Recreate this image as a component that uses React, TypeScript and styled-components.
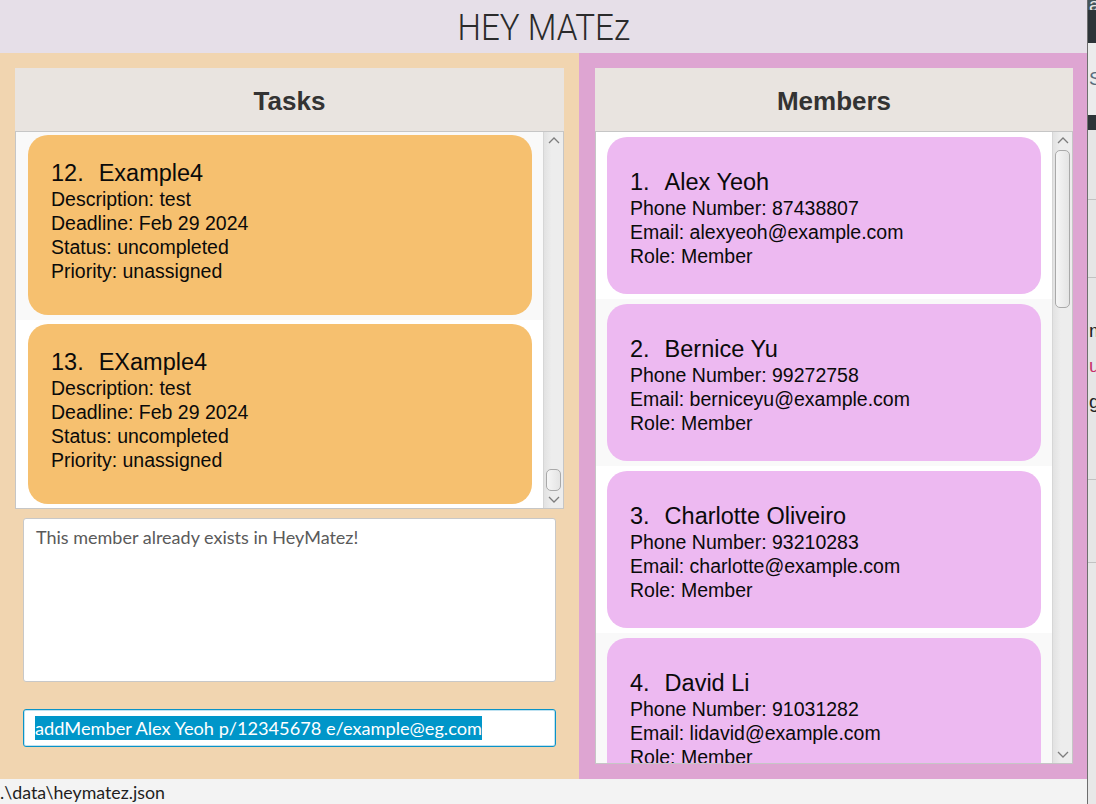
import React from 'react';
import styled, { createGlobalStyle } from 'styled-components';

const GlobalStyle = createGlobalStyle`
  html, body { margin: 0; padding: 0; width: 1096px; height: 804px; overflow: hidden; background: #f3f3f3; }
  #root { width: 1096px; height: 804px; }
  * { box-sizing: border-box; }
`;

const Screen = styled.div`
  display: flex;
  width: 1096px;
  height: 804px;
`;

const AppWindow = styled.div`
  width: 1087px;
  display: flex;
  flex-direction: column;
`;

const TitleBar = styled.header`
  height: 53px;
  background: #e6dfe8;
  display: flex;
  align-items: center;
  justify-content: center;
`;

const TitleText = styled.h1`
  margin: 0;
  padding-top: 2px;
  font-family: Roboto, "Liberation Sans", sans-serif;
  font-weight: 300;
  font-size: 36px;
  line-height: 1;
  color: #2b2b2b;
  transform: scaleX(0.92);
`;

const Main = styled.main`
  flex: 1;
  min-height: 0;
  display: grid;
  grid-template-columns: 579px 1fr;
`;

const LeftPane = styled.section`
  background: #f1d5b0;
  padding: 15px 15px 0 15px;
  display: flex;
  flex-direction: column;
  min-height: 0;
`;

const RightPane = styled.section`
  background: #dea5d2;
  padding: 15px 14px 15px 16px;
  display: flex;
  flex-direction: column;
  min-height: 0;
`;

const Panel = styled.div<{ $grow?: boolean }>`
  display: flex;
  flex-direction: column;
  flex: ${(p) => (p.$grow ? '1' : 'none')};
  min-height: 0;
`;

const PanelHeader = styled.div`
  height: 63px;
  flex: none;
  padding-top: 3px;
  background: #e9e4e0;
  display: flex;
  align-items: center;
  justify-content: center;
  font-family: "Liberation Sans", Arial, sans-serif;
  font-weight: 700;
  font-size: 26px;
  color: #333333;
`;

const ListBox = styled.div<{ $height?: number }>`
  ${(p) => (p.$height ? `height: ${p.$height}px; flex: none;` : 'flex: 1;')}
  min-height: 0;
  border: 1px solid #c6c6c6;
  background: #ffffff;
  display: flex;
`;

const Viewport = styled.div`
  flex: 1;
  min-width: 0;
  overflow: hidden;
`;

const ViewportInner = styled.div<{ $shift: number }>`
  margin-top: ${(p) => p.$shift}px;
`;

const Cell = styled.div<{ $odd: boolean; $kind: 'task' | 'member' }>`
  background: ${(p) => (p.$odd ? '#f9f9f9' : '#ffffff')};
  padding: ${(p) => (p.$kind === 'task' ? '4px 11px 5px 12px' : '5px 11px 5px 11px')};
`;

const Card = styled.div<{ $kind: 'task' | 'member' }>`
  border-radius: 20px;
  background: ${(p) => (p.$kind === 'task' ? '#f6c06f' : '#edb9f1')};
  padding: ${(p) => (p.$kind === 'task' ? '24px 20px 32px 23px' : '31px 20px 26px 23px')};
  font-family: "Liberation Sans", Arial, sans-serif;
  color: #0a0a0a;
`;

const CardTitle = styled.div`
  display: flex;
  align-items: baseline;
  font-size: 23.5px;
  line-height: 28px;
  white-space: nowrap;
`;

const CardIndex = styled.span`
  margin-right: 15px;
`;

const CardLine = styled.div`
  font-size: 19.5px;
  line-height: 24px;
  white-space: nowrap;
`;

const ScrollBar = styled.div`
  width: 20px;
  flex: none;
  display: flex;
  flex-direction: column;
  background: linear-gradient(to right, #e2e2e2, #ededed 40%, #ededed);
  border-left: 1px solid #d6d6d6;
`;

const ScrollButton = styled.div`
  height: 17px;
  flex: none;
  display: flex;
  align-items: center;
  justify-content: center;
`;

const Track = styled.div<{ $offset: number }>`
  flex: 1;
  padding-top: ${(p) => p.$offset}px;
`;

const Thumb = styled.div<{ $height: number }>`
  height: ${(p) => p.$height}px;
  margin: 0 2px 0 2px;
  border: 1px solid #a9a9a9;
  border-radius: 5px;
  background: linear-gradient(to right, #f6f6f6, #e4e4e4);
`;

const ResultBox = styled.div`
  margin: 9px 8px 0 8px;
  height: 164px;
  flex: none;
  background: #ffffff;
  border: 1px solid #c8c8c8;
  border-radius: 3px;
  padding: 7px 12px;
  font-family: Lato, "Open Sans", sans-serif;
  font-size: 18px;
  line-height: 22px;
  color: #5a5a5a;
`;

const CommandBox = styled.div`
  margin: 27px 8px 0 8px;
  height: 38px;
  flex: none;
  background: #ffffff;
  border: 1px solid #0a93c7;
  box-shadow: inset 0 0 0 1px #bfe2f1;
  border-radius: 3px;
  padding-left: 11px;
  display: flex;
  align-items: center;
`;

const Selection = styled.span`
  background: #0096c9;
  color: #ffffff;
  height: 24px;
  line-height: 24px;
  font-family: Lato, "Open Sans", sans-serif;
  font-size: 18.2px;
  white-space: nowrap;
`;

const StatusBar = styled.footer`
  height: 25px;
  flex: none;
  background: #f3f3f3;
  font-family: Lato, "Open Sans", sans-serif;
  font-size: 17.8px;
  line-height: 27px;
  color: #1e1e1e;
  white-space: nowrap;
`;

const Divider = styled.div`
  width: 1px;
  background: #6e6e6e;
`;

const Strip = styled.div`
  flex: 1;
  display: flex;
  flex-direction: column;
  overflow: hidden;
  background: #e6e6e6;
  font-family: "Liberation Sans", Arial, sans-serif;
  font-size: 19px;
`;

const StripBand = styled.div<{ $h: number; $bg: string; $color?: string; $line?: boolean }>`
  height: ${(p) => p.$h}px;
  flex: none;
  background: ${(p) => p.$bg};
  color: ${(p) => p.$color || '#222'};
  border-bottom: ${(p) => (p.$line ? '1px solid #c2c2c2' : 'none')};
  line-height: ${(p) => p.$h}px;
  padding-left: 1px;
  overflow: hidden;
  white-space: nowrap;
`;

const Chevron = ({ down }: { down?: boolean }) => (
  <svg width="12" height="7" viewBox="0 0 12 7">
    <polyline
      points={down ? '1,1 6,6 11,1' : '1,6 6,1 11,6'}
      fill="none"
      stroke="#7d7d7d"
      strokeWidth="1.3"
    />
  </svg>
);

type Task = { id: number; name: string; description: string; deadline: string; status: string; priority: string };
type Member = { id: number; name: string; phone: string; email: string; role: string };

const tasks: Task[] = [
  { id: 12, name: 'Example4', description: 'test', deadline: 'Feb 29 2024', status: 'uncompleted', priority: 'unassigned' },
  { id: 13, name: 'EXample4', description: 'test', deadline: 'Feb 29 2024', status: 'uncompleted', priority: 'unassigned' },
];

const members: Member[] = [
  { id: 1, name: 'Alex Yeoh', phone: '87438807', email: 'alexyeoh@example.com', role: 'Member' },
  { id: 2, name: 'Bernice Yu', phone: '99272758', email: 'berniceyu@example.com', role: 'Member' },
  { id: 3, name: 'Charlotte Oliveiro', phone: '93210283', email: 'charlotte@example.com', role: 'Member' },
  { id: 4, name: 'David Li', phone: '91031282', email: 'lidavid@example.com', role: 'Member' },
];

const Scroller = ({ offset, height }: { offset: number; height: number }) => (
  <ScrollBar>
    <ScrollButton>
      <Chevron />
    </ScrollButton>
    <Track $offset={offset}>
      <Thumb $height={height} />
    </Track>
    <ScrollButton>
      <Chevron down />
    </ScrollButton>
  </ScrollBar>
);

export default function App() {
  return (
    <>
      <GlobalStyle />
      <Screen>
        <AppWindow>
          <TitleBar>
            <TitleText>HEY MATEz</TitleText>
          </TitleBar>
          <Main>
            <LeftPane>
              <Panel>
                <PanelHeader>Tasks</PanelHeader>
                <ListBox $height={378}>
                  <Viewport>
                    <ViewportInner $shift={-1}>
                      {tasks.map((t) => (
                        <Cell key={t.id} $kind="task" $odd={(t.id - 1) % 2 === 1}>
                          <Card $kind="task">
                            <CardTitle>
                              <CardIndex>{t.id}.</CardIndex>
                              <span>{t.name}</span>
                            </CardTitle>
                            <CardLine>Description: {t.description}</CardLine>
                            <CardLine>Deadline: {t.deadline}</CardLine>
                            <CardLine>Status: {t.status}</CardLine>
                            <CardLine>Priority: {t.priority}</CardLine>
                          </Card>
                        </Cell>
                      ))}
                    </ViewportInner>
                  </Viewport>
                  <Scroller offset={320} height={22} />
                </ListBox>
              </Panel>
              <ResultBox>This member already exists in HeyMatez!</ResultBox>
              <CommandBox>
                <Selection>addMember Alex Yeoh p/12345678 e/example@eg.com</Selection>
              </CommandBox>
            </LeftPane>
            <RightPane>
              <Panel $grow>
                <PanelHeader>Members</PanelHeader>
                <ListBox>
                  <Viewport>
                    <ViewportInner $shift={0}>
                      {members.map((m) => (
                        <Cell key={m.id} $kind="member" $odd={(m.id - 1) % 2 === 1}>
                          <Card $kind="member">
                            <CardTitle>
                              <CardIndex>{m.id}.</CardIndex>
                              <span>{m.name}</span>
                            </CardTitle>
                            <CardLine>Phone Number: {m.phone}</CardLine>
                            <CardLine>Email: {m.email}</CardLine>
                            <CardLine>Role: {m.role}</CardLine>
                          </Card>
                        </Cell>
                      ))}
                    </ViewportInner>
                  </Viewport>
                  <Scroller offset={1} height={158} />
                </ListBox>
              </Panel>
            </RightPane>
          </Main>
          <StatusBar>.\data\heymatez.json</StatusBar>
        </AppWindow>
        <Divider />
        <Strip>
          <StripBand $h={10} $bg="#44555b" $color="#e8e8e8">a</StripBand>
          <StripBand $h={33} $bg="#2d3438" />
          <StripBand $h={72} $bg="#ececec" $color="#5b6d7c">S</StripBand>
          <StripBand $h={15} $bg="#2d3438" />
          <StripBand $h={70} $bg="#e6e6e6" $line />
          <StripBand $h={78} $bg="#e6e6e6" $line />
          <StripBand $h={36} $bg="#e6e6e6" />
          <StripBand $h={34} $bg="#e6e6e6" $color="#222">m</StripBand>
          <StripBand $h={36} $bg="#e6e6e6" $color="#c8306b">u</StripBand>
          <StripBand $h={36} $bg="#e6e6e6" $color="#222">g</StripBand>
          <StripBand $h={60} $bg="#e6e6e6" $line />
          <StripBand $h={83} $bg="#e6e6e6" $line />
          <StripBand $h={260} $bg="#e8e8e8" />
        </Strip>
      </Screen>
    </>
  );
}
